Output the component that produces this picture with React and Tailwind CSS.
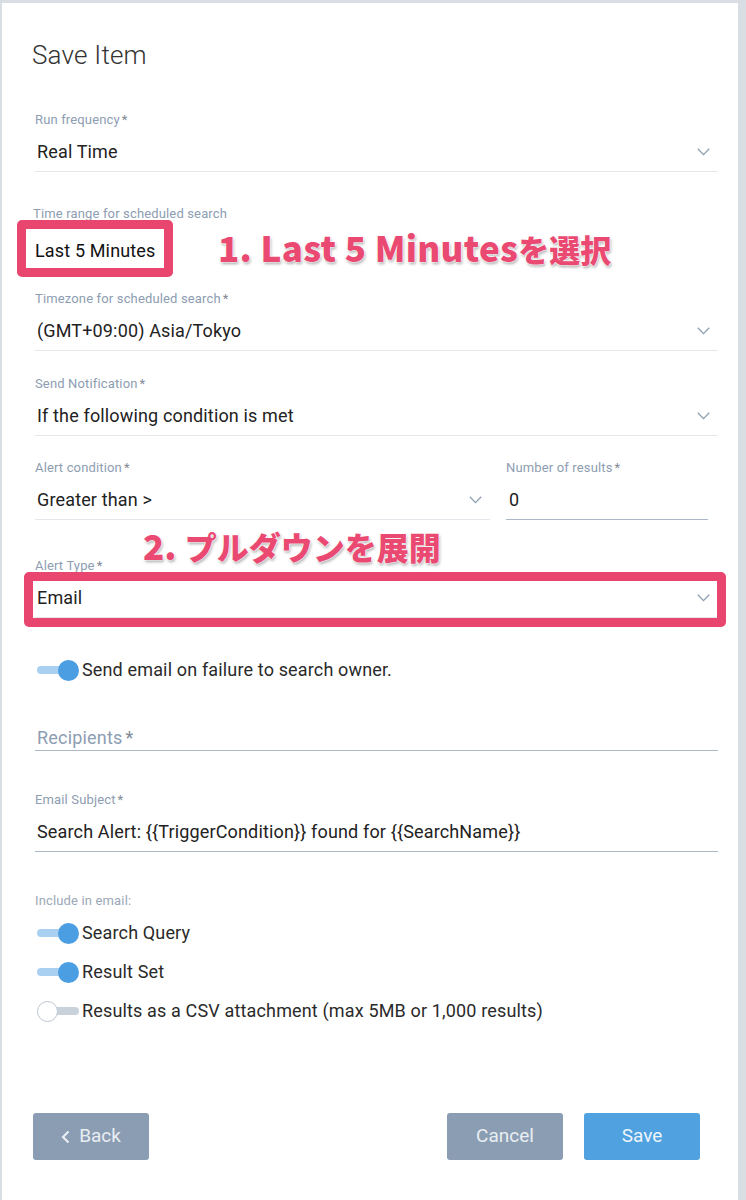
import React from "react";

const FONT = { fontFamily: "Roboto, 'Noto Sans', Arial, sans-serif" };
const CJK = { fontFamily: "'Noto Sans CJK JP', sans-serif" };

function Chevron() {
  return (
    <svg width="13" height="8" viewBox="0 0 13 8" className="shrink-0">
      <polyline points="0.8,0.8 6.5,6.6 12.2,0.8" fill="none" stroke="#8d9db2" strokeWidth="1.3" />
    </svg>
  );
}

function Label({ children, star = true }) {
  return (
    <div className="h-4 text-[13px] leading-4 tracking-[0.15px] text-[#8d9db2]">
      {children}
      {star && <span className="ml-[2px] text-[#7f8a96]">*</span>}
    </div>
  );
}

function SelectField({ label, value, className = "", chevron = true, line = "border-[#e3e6ea]" }) {
  return (
    <div className={className}>
      <Label>{label}</Label>
      <div className={`flex items-center justify-between border-b ${line} pt-3 pb-[7px] pl-[2px] pr-2`}>
        <span className="h-6 text-[18px] leading-6 tracking-[0.15px] text-[#222]">{value}</span>
        {chevron && <Chevron />}
      </div>
    </div>
  );
}

function Toggle({ on, label }) {
  return (
    <div className="flex h-6 items-center">
      <div className="relative h-[22px] w-[42px] shrink-0">
        <div
          className={`absolute top-[7px] h-[8px] rounded-full ${
            on ? "left-0 w-[40px] bg-[#a9d0f1]" : "left-[12px] w-[30px] bg-[#c9d2db]"
          }`}
        />
        <div
          className={`absolute top-[0.5px] h-[21px] w-[21px] rounded-full ${
            on ? "left-[21px] bg-[#4b9ee2]" : "left-0 border border-[#bcc6d0] bg-white"
          }`}
        />
      </div>
      <span className="ml-[3px] text-[18px] leading-6 tracking-[0.15px] text-[#2a2a2a]">{label}</span>
    </div>
  );
}

const annot =
  "absolute whitespace-nowrap leading-none font-black text-[#ea4a72] [text-shadow:0_0_2px_#fff,0_0_2px_#fff,0_0_1px_#fff,1px_2px_3px_rgba(0,0,0,0.35)]";

export default function App() {
  return (
    <div className="min-h-[1200px] w-[746px] bg-[#d8dee4] pl-[2px] pt-[3px] pr-[8px]" style={FONT}>
      <div className="relative h-[1197px] w-[736px] bg-white pl-[33px] pr-[20px] pt-[36px]">
        <h1 className="-ml-[3px] h-8 text-[26px] font-light leading-8 tracking-[0.2px] text-[#333]">Save Item</h1>

        <SelectField className="mt-[41px]" label="Run frequency" value="Real Time" />

        <div className="mt-[34px] -ml-[2px]">
          <Label star={false}>Time range for scheduled search</Label>
          <div className="mt-[17px] h-6 pl-[2px] text-[18px] leading-6 tracking-[0.15px] text-[#111]">Last 5 Minutes</div>
        </div>

        <SelectField className="mt-[28px]" label="Timezone for scheduled search" value="(GMT+09:00) Asia/Tokyo" />
        <SelectField className="mt-[25px]" label="Send Notification" value="If the following condition is met" />

        <div className="mt-[24px] flex gap-4">
          <SelectField className="w-[455px]" label="Alert condition" value="Greater than >" />
          <div className="w-[202px]">
            <Label>Number of results</Label>
            <div className="border-b border-[#a9b7c7] pt-3 pb-[7px] pl-[3px]">
              <span className="block h-6 text-[18px] leading-6 text-[#222]">0</span>
            </div>
          </div>
        </div>

        <SelectField className="mt-[38px]" label="Alert Type" value="Email" />

        <div className="mt-[40px] ml-[2px]">
          <Toggle on label="Send email on failure to search owner." />
        </div>

        <div className="mt-[44px] flex h-[25px] items-center border-b border-[#a9b7c7] pl-[2px]">
          <span className="text-[18px] leading-6 tracking-[0.2px] text-[#8d9db2]">
            Recipients<span className="ml-[3px] text-[#7f8a96]">*</span>
          </span>
        </div>

        <SelectField
          className="mt-[41px]"
          label="Email Subject"
          value="Search Alert: {{TriggerCondition}} found for {{SearchName}}"
          chevron={false}
          line="border-[#a9b7c7]"
        />

        <div className="mt-[41px] h-4 text-[13px] leading-4 tracking-[0.15px] text-[#9aa8b8]">Include in email:</div>
        <div className="mt-[12px] ml-[2px] flex flex-col gap-[15px]">
          <Toggle on label="Search Query" />
          <Toggle on label="Result Set" />
          <Toggle on={false} label="Results as a CSV attachment (max 5MB or 1,000 results)" />
        </div>

        <div className="mt-[90px] -ml-[2px] flex items-center">
          <button className="flex h-[47px] w-[116px] items-center justify-center gap-[9px] rounded-[3px] bg-[#8b9db2] text-[19px] text-[#e9eef3]">
            <svg width="9" height="14" viewBox="0 0 9 14">
              <polyline points="7.5,1.5 2,7 7.5,12.5" fill="none" stroke="#e9eef3" strokeWidth="2.2" />
            </svg>
            Back
          </button>
          <div className="flex-1" />
          <button className="h-[47px] w-[116px] rounded-[3px] bg-[#8b9db2] text-[19px] text-[#e9eef3]">Cancel</button>
          <button className="ml-[21px] mr-[18px] h-[47px] w-[116px] rounded-[3px] bg-[#4fa1e0] text-[19px] text-[#eef5fc]">
            Save
          </button>
        </div>

        {/* annotation overlays */}
        <div className="absolute left-[15px] top-[217px] h-[57px] w-[156px] rounded-[5px] border-[9px] border-[#e8466e]" />
        <div className="absolute left-[22px] top-[569px] h-[55px] w-[702px] rounded-[5px] border-[9px] border-[#e8466e]" />
        <div className={`${annot} left-[216px] top-[226px] flex items-baseline`} style={CJK}>
          <span className="text-[35px] tracking-[0.3px]">1. Last 5 Minutes</span>
          <span className="text-[31px]">を選択</span>
        </div>
        <div className={`${annot} left-[141px] top-[524px] flex items-baseline`} style={CJK}>
          <span className="text-[35px]">2.&nbsp;</span>
          <span className="text-[32px]">プルダウンを展開</span>
        </div>
      </div>
    </div>
  );
}
